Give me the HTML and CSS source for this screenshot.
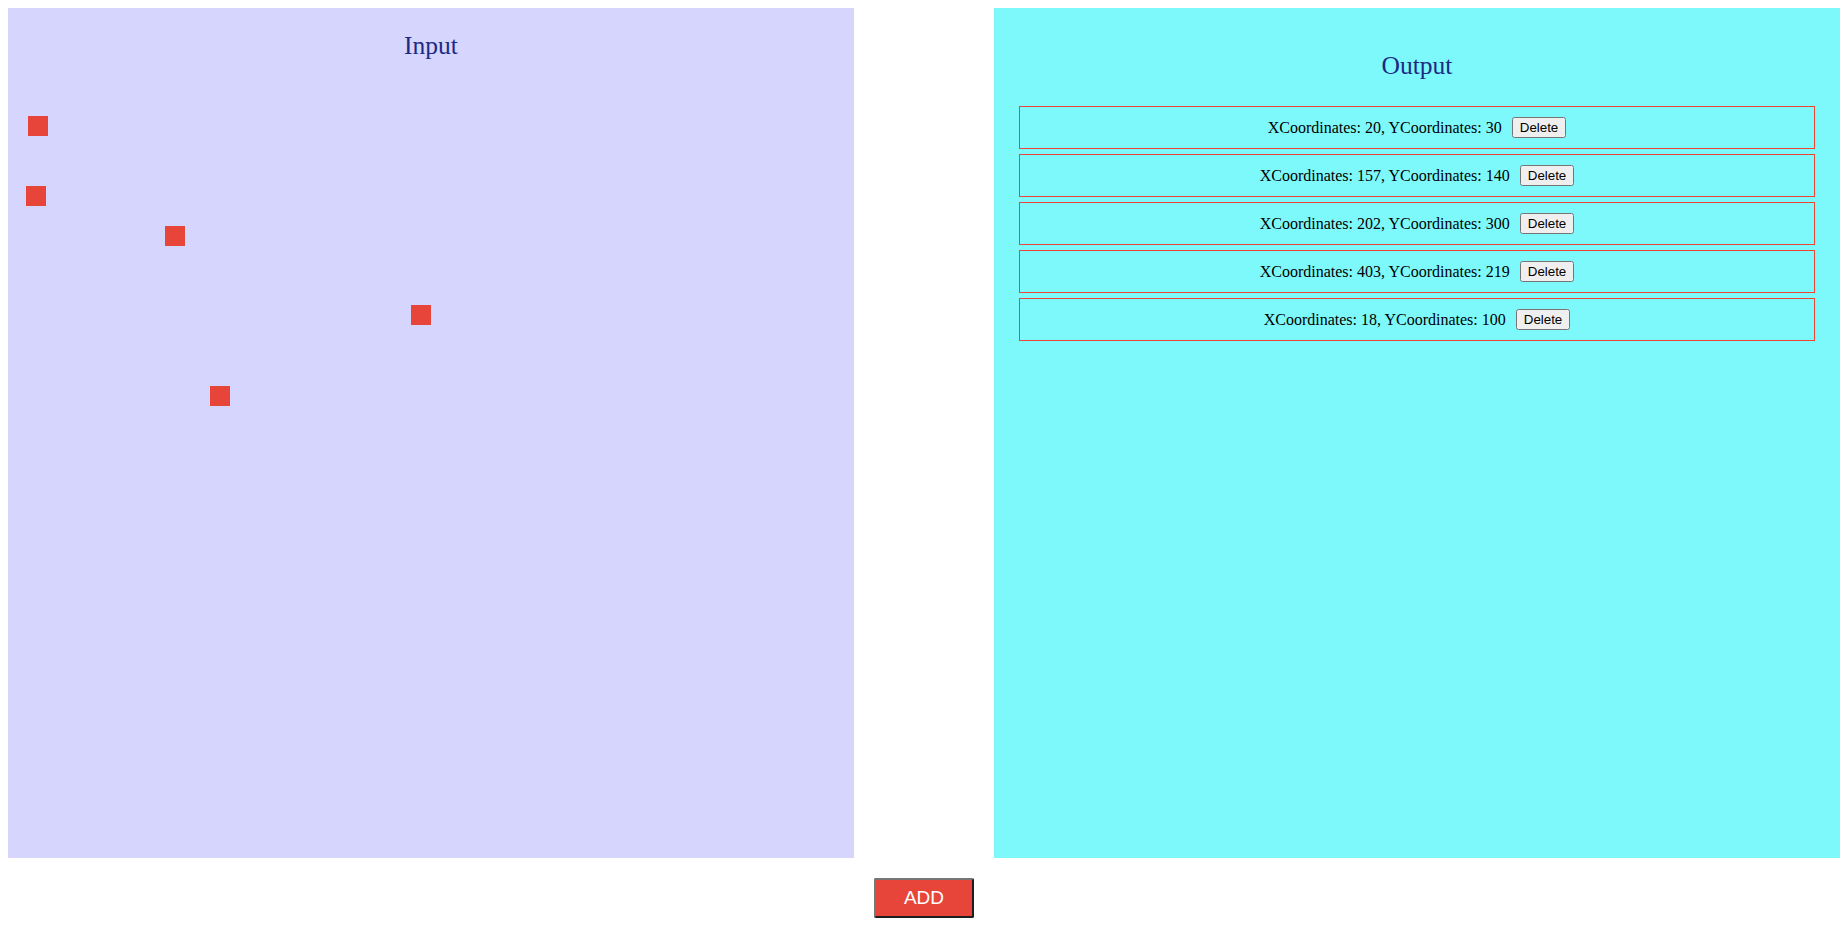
FILE: index.html
```html
<!DOCTYPE html>
<html>
<head>
<meta charset="utf-8">
<title>Coordinates</title>
<link rel="stylesheet" href="styles.css">
</head>
<body>
<div class="panels">
  <section class="panel panel-input">
    <h2 class="title title-input">Input</h2>
    <div class="canvas">
      <div class="dot" style="left:20px;top:30px"></div>
      <div class="dot" style="left:157px;top:140px"></div>
      <div class="dot" style="left:202px;top:300px"></div>
      <div class="dot" style="left:403px;top:219px"></div>
      <div class="dot" style="left:18px;top:100px"></div>
    </div>
  </section>
  <section class="panel panel-output">
    <h2 class="title title-output">Output</h2>
    <div class="list">
      <div class="row"><span>XCoordinates: 20, YCoordinates: 30</span><button class="del">Delete</button></div>
      <div class="row"><span>XCoordinates: 157, YCoordinates: 140</span><button class="del">Delete</button></div>
      <div class="row"><span>XCoordinates: 202, YCoordinates: 300</span><button class="del">Delete</button></div>
      <div class="row"><span>XCoordinates: 403, YCoordinates: 219</span><button class="del">Delete</button></div>
      <div class="row"><span>XCoordinates: 18, YCoordinates: 100</span><button class="del">Delete</button></div>
    </div>
  </section>
</div>
<div class="actions">
  <button class="add">ADD</button>
</div>
</body>
</html>
```
FILE: styles.css
```css
body {
  margin: 8px;
  font-family: "Liberation Serif", "Times New Roman", serif;
  font-size: 16px;
  background: #ffffff;
}
.panels {
  display: flex;
  justify-content: space-between;
}
.panel {
  width: 846px;
  height: 850px;
  box-sizing: border-box;
}
.panel-input {
  background: #d5d5fe;
  padding-top: 24px;
}
.panel-output {
  background: #7ef9fb;
  padding-top: 44px;
}
.title {
  margin: 0;
  font-weight: normal;
  font-size: 25.5px;
  line-height: 28px;
  text-align: center;
  color: #1c2a85;
}
.title-input {
  margin-bottom: 26px;
}
.title-output {
  margin-bottom: 26px;
}
.canvas {
  position: relative;
  height: 700px;
}
.dot {
  position: absolute;
  width: 20px;
  height: 20px;
  background: #e8453a;
}
.list {
  display: flex;
  flex-direction: column;
  gap: 5px;
  padding: 0 25px;
}
.row {
  height: 43px;
  box-sizing: border-box;
  border: 1px solid #f04433;
  display: flex;
  align-items: center;
  justify-content: center;
  gap: 10px;
  color: #000;
}
.del {
  font-family: "Liberation Sans", Arial, sans-serif;
  font-size: 13.333px;
  padding: 1px 6px;
}
.actions {
  display: flex;
  justify-content: center;
  margin-top: 20px;
}
.add {
  width: 100px;
  height: 40px;
  background: #e8453a;
  color: #ffffff;
  font-family: "Liberation Sans", Arial, sans-serif;
  font-size: 19px;
  border-style: solid;
  border-width: 2px;
  border-color: #767676 #1e1e1e #1e1e1e #767676;
  border-radius: 2px;
  padding: 0;
}
```
